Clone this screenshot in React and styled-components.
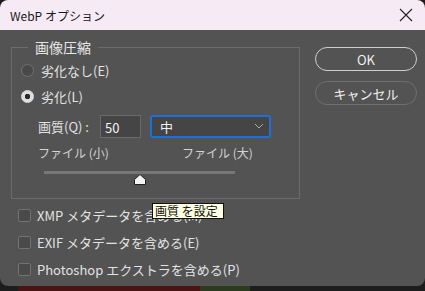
import React from "react";
import styled, { createGlobalStyle } from "styled-components";

const Global = createGlobalStyle`
  html, body { margin: 0; padding: 0; background: #1b1b1b; }
  body { font-family: "Noto Sans CJK JP", "Noto Sans", sans-serif; }
`;

const Window = styled.div`
  width: 425px;
  height: 291px;
  display: flex;
  flex-direction: column;
  background: linear-gradient(90deg, #1d1d1d 0 18px, #4a1414 18px 200px, #2c3a20 200px 250px, #1d1d1d 250px);
`;

const TitleBar = styled.div`
  height: 30px;
  background: #f6ebf4;
  display: flex;
  align-items: center;
  justify-content: space-between;
  padding: 0 7px 0 10px;
  border-radius: 8px 8px 0 0;
  font-size: 12px;
  color: #1a1a1a;
`;

const Body = styled.div`
  height: 256px;
  background: #535353;
  border-radius: 0 0 8px 8px;
  display: flex;
  position: relative;
  color: #e2e2e2;
  font-size: 13px;
`;

const Left = styled.div`
  width: 289px;
  padding: 8px 0 0 11px;
`;

const Group = styled.fieldset`
  margin: 0;
  height: 161px;
  box-sizing: border-box;
  border: 1px solid #6b6b6b;
  padding: 2px 0 0 9px;
  display: flex;
  flex-direction: column;
`;

const Legend = styled.legend`
  margin-left: 7px;
  padding: 0 7px 0 7px;
  font-size: 14px;
  line-height: 18px;
  color: #e6e6e6;
`;

const Row = styled.div`
  display: flex;
  align-items: center;
  height: ${(p) => p.h || 26}px;
`;

const Radio = styled.span`
  width: 13px;
  height: 13px;
  box-sizing: border-box;
  border-radius: 50%;
  margin-right: 7px;
  border: 1px solid ${(p) => (p.on ? "#e0e0e0" : "#727272")};
  background: ${(p) => (p.on ? "radial-gradient(circle, #2a2a2a 0 2.5px, #dedede 3px)" : "#494949")};
`;

const Indent = styled.div`
  padding-left: 17px;
  display: flex;
  flex-direction: column;
`;

const Input = styled.div`
  width: 41px;
  height: 23px;
  box-sizing: border-box;
  background: #454545;
  border: 1px solid #6a6a6a;
  padding: 2px 0 0 4px;
  font-size: 13px;
  color: #f2f2f2;
  margin-left: 11px;
`;

const Select = styled.div`
  width: 121px;
  height: 23px;
  box-sizing: border-box;
  background: #454545;
  border: 2px solid #1f6fd8;
  border-radius: 3px;
  margin-left: 9px;
  display: flex;
  align-items: center;
  justify-content: space-between;
  padding: 0 5px 0 8px;
  color: #f2f2f2;
`;

const Small = styled.span`
  font-size: 12px;
  color: #d4d4d4;
  width: ${(p) => p.w || "auto"};
`;

const Track = styled.div`
  margin: 9px 0 0 6px;
  width: 191px;
  height: 3px;
  background: #777;
  position: relative;
`;

const Thumb = styled.svg`
  position: absolute;
  left: 90px;
  top: 3px;
`;

const Checks = styled.div`
  display: flex;
  flex-direction: column;
  padding: 3px 0 0 7px;
`;

const Check = styled.span`
  width: 13px;
  height: 13px;
  box-sizing: border-box;
  border: 1px solid #727272;
  border-radius: 2px;
  background: #4a4a4a;
  margin-right: 6px;
`;

const Right = styled.div`
  display: flex;
  flex-direction: column;
  padding: 17px 0 0 15px;
  gap: 10px;
`;

const Button = styled.div`
  width: 102px;
  height: 24px;
  box-sizing: border-box;
  border-radius: 12px;
  border: 1.5px solid ${(p) => (p.primary ? "#cfcfcf" : "#6f6f6f")};
  display: flex;
  align-items: center;
  justify-content: center;
  font-size: 13px;
  color: #f0f0f0;
`;

const Tooltip = styled.div`
  position: absolute;
  left: 152px;
  top: 173px;
  height: 16px;
  box-sizing: border-box;
  padding: 0 5px 0 2px;
  background: #ffffe1;
  border: 1px solid #111;
  color: #111;
  font-size: 12px;
  line-height: 14px;
`;

export default function App() {
  const checks = ["XMP メタデータを含める(M)", "EXIF メタデータを含める(E)", "Photoshop エクストラを含める(P)"];
  return (
    <>
      <Global />
      <Window>
        <TitleBar>
          <span>WebP オプション</span>
          <svg width="24" height="24" viewBox="0 0 24 24">
            <path d="M6 6 L18 18 M18 6 L6 18" stroke="#222" strokeWidth="1.1" fill="none" />
          </svg>
        </TitleBar>
        <Body>
          <Left>
            <Group>
              <Legend>画像圧縮</Legend>
              <Row h={24}>
                <Radio />
                劣化なし(E)
              </Row>
              <Row h={28}>
                <Radio on />
                劣化(L)
              </Row>
              <Indent>
                <Row h={32}>
                  画質(Q) :
                  <Input>50</Input>
                  <Select>
                    <span>中</span>
                    <svg width="10" height="6" viewBox="0 0 10 6">
                      <path d="M1 1 L5 5 L9 1" stroke="#aaa" strokeWidth="1" fill="none" />
                    </svg>
                  </Select>
                </Row>
                <Row h={20}>
                  <Small w="144px">ファイル (小)</Small>
                  <Small>ファイル (大)</Small>
                </Row>
                <Track>
                  <Thumb width="12" height="11" viewBox="0 0 12 11">
                    <path d="M6 0.5 L11.5 5.5 L11.5 10.5 L0.5 10.5 L0.5 5.5 Z" fill="#f4f4f4" stroke="#222" strokeWidth="1" strokeLinejoin="round" />
                  </Thumb>
                </Track>
              </Indent>
            </Group>
            <Checks>
              {checks.map((c) => (
                <Row key={c} h={27}>
                  <Check />
                  {c}
                </Row>
              ))}
            </Checks>
          </Left>
          <Right>
            <Button primary>OK</Button>
            <Button>キャンセル</Button>
          </Right>
          <Tooltip>画質 を設定</Tooltip>
        </Body>
      </Window>
    </>
  );
}
